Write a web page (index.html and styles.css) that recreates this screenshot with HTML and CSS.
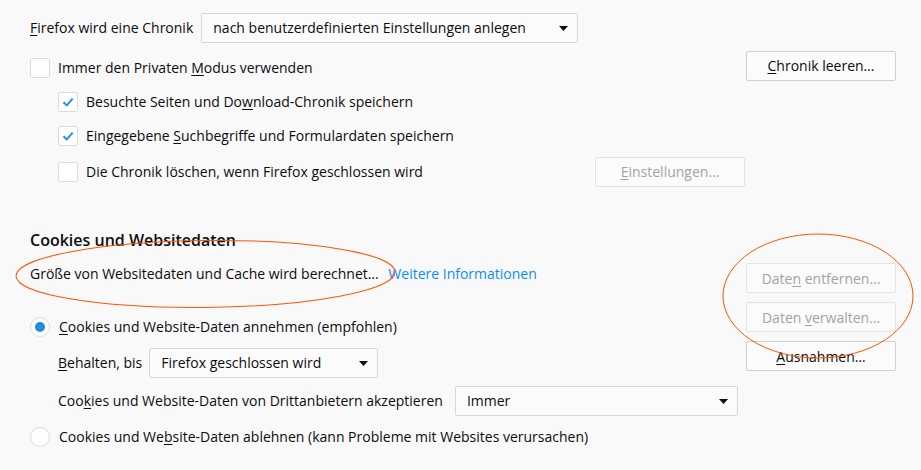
FILE: index.html
```html
<!DOCTYPE html>
<html lang="de">
<head>
    <meta charset="UTF-8">
    <title>Datenschutz &amp; Sicherheit</title>
    <link rel="stylesheet" href="styles.css">
</head>
<body>
    <div class="prefs">
        <!-- Chronik -->
        <div class="row row-history">
            <span class="label"><u>F</u>irefox wird eine Chronik</span>
            <div class="select select-history">
                <span>nach benutzerdefinierten Einstellungen anlegen</span>
                <svg class="arrow" width="9" height="5" viewBox="0 0 9 5"><path d="M0 0H9L4.5 5Z"/></svg>
            </div>
        </div>

        <div class="row row-private">
            <label class="check">
                <span class="box"></span>
                <span>Immer den Privaten <u>M</u>odus verwenden</span>
            </label>
            <button class="btn"><u>C</u>hronik leeren…</button>
        </div>

        <div class="row indent row-check">
            <label class="check">
                <span class="box checked">
                    <svg width="18" height="18" viewBox="0 0 18 18"><path d="M4.5 9.2L7.8 12.4L13.6 5.6"/></svg>
                </span>
                <span>Besuchte Seiten und Do<u>w</u>nload-Chronik speichern</span>
            </label>
        </div>

        <div class="row indent row-check row-check2">
            <label class="check">
                <span class="box checked">
                    <svg width="18" height="18" viewBox="0 0 18 18"><path d="M4.5 9.2L7.8 12.4L13.6 5.6"/></svg>
                </span>
                <span>Eingegebene <u>S</u>uchbegriffe und Formulardaten speichern</span>
            </label>
        </div>

        <div class="row indent row-clear">
            <label class="check">
                <span class="box"></span>
                <span>Die Chronik löschen, wenn Firefox <u>g</u>eschlossen wird</span>
            </label>
            <button class="btn" disabled><u>E</u>instellungen…</button>
        </div>

        <!-- Cookies -->
        <h2>Cookies und Websitedaten</h2>

        <div class="cookies">
            <div class="cookies-left">
                <div class="size-info">
                    Größe von Websitedaten und Cache wird berechnet…
                    <a href="#">Weitere Informationen</a>
                </div>

                <label class="radio row-radio1">
                    <span class="dot selected"></span>
                    <span><u>C</u>ookies und Website-Daten annehmen (empfohlen)</span>
                </label>

                <div class="row indent row-keep">
                    <span class="label"><u>B</u>ehalten, bis</span>
                    <div class="select select-keep">
                        <span>Firefox geschlossen wird</span>
                        <svg class="arrow" width="9" height="5" viewBox="0 0 9 5"><path d="M0 0H9L4.5 5Z"/></svg>
                    </div>
                </div>

                <div class="row indent row-third">
                    <span class="label">Coo<u>k</u>ies und Website-Daten von Drittanbietern akzeptieren</span>
                    <div class="select select-third">
                        <span>Immer</span>
                        <svg class="arrow" width="9" height="5" viewBox="0 0 9 5"><path d="M0 0H9L4.5 5Z"/></svg>
                    </div>
                </div>

                <label class="radio row-radio2">
                    <span class="dot"></span>
                    <span>Cookies und We<u>b</u>site-Daten ablehnen (kann Probleme mit Websites verursachen)</span>
                </label>
            </div>

            <div class="cookies-right">
                <button class="btn" disabled>Date<u>n</u> entfernen…</button>
                <button class="btn" disabled>Daten <u>v</u>erwalten…</button>
                <button class="btn"><u>A</u>usnahmen…</button>
            </div>
        </div>
    </div>

    <!-- Markierungen -->
    <svg class="marks" width="921" height="470" viewBox="0 0 921 470">
        <ellipse cx="205.5" cy="274" rx="189.5" ry="33.5" transform="rotate(-0.6 205.5 274)"/>
        <ellipse cx="818" cy="296" rx="95" ry="62"/>
    </svg>
</body>
</html>
```

FILE: styles.css
```css
body {
    margin: 0;
    background-color: #f9f9fa;
    color: #0c0c0d;
    font-family: "Open Sans", "Noto Sans", sans-serif;
    font-size: 14px;
    line-height: 20px;
    width: 921px;
    height: 470px;
    overflow: hidden;
}
u {
    text-decoration-thickness: 1px;
    text-underline-offset: 2px;
}
.prefs {
    padding: 13px 0 0 30px;
    width: 866px;
}
.row {
    display: flex;
    align-items: center;
}
.indent {
    margin-left: 28px;
}
.label {
    margin-right: 8px;
}
.select {
    display: flex;
    align-items: center;
    justify-content: space-between;
    box-sizing: border-box;
    height: 30px;
    padding: 0 9px 0 11px;
    background-color: #fbfbfb;
    border: 1px solid #d7d7db;
    border-radius: 2px;
}
.arrow {
    fill: #0c0c0d;
}
.select-history {
    width: 377px;
}
.select-keep {
    width: 229px;
}
.select-third {
    width: 283px;
}
.btn {
    box-sizing: border-box;
    width: 150px;
    height: 30px;
    padding: 0;
    font-family: inherit;
    font-size: 14px;
    color: #0c0c0d;
    background-color: #fbfbfb;
    border: 1px solid #d0d0d3;
    border-radius: 2px;
}
.btn:disabled {
    color: #a3a3a5;
    border-color: #e3e3e5;
}
.check,
.radio {
    display: flex;
    align-items: center;
}
.box {
    box-sizing: border-box;
    width: 20px;
    height: 20px;
    margin-right: 8px;
    background-color: #fff;
    border: 1px solid #dcdcde;
    border-radius: 2px;
    display: flex;
    align-items: center;
    justify-content: center;
}
.box svg path {
    fill: none;
    stroke: #2590e0;
    stroke-width: 2;
}
.row-private {
    margin-top: 8px;
    height: 29px;
    justify-content: space-between;
}
.row-private .check {
    margin-top: 5px;
}
.row-check {
    margin-top: 12px;
    height: 20px;
}
.row-check2 {
    margin-top: 14px;
}
.row-clear {
    margin-top: 11px;
    height: 29px;
    justify-content: space-between;
    margin-right: 151px;
}
h2 {
    margin: 42px 0 0;
    font-size: 16px;
    font-weight: 600;
    line-height: 24px;
    color: #0c0c0d;
}
.cookies {
    display: flex;
    justify-content: space-between;
    margin-top: 11px;
}
.size-info {
    height: 20px;
    margin-top: 1px;
}
.size-info a {
    margin-left: 6px;
    color: #0a8dff;
    text-decoration: none;
}
.dot {
    box-sizing: border-box;
    width: 20px;
    height: 20px;
    margin-right: 9px;
    background-color: #fff;
    border: 1px solid #dcdcde;
    border-radius: 50%;
    display: flex;
    align-items: center;
    justify-content: center;
}
.dot.selected::after {
    content: "";
    width: 10px;
    height: 10px;
    border-radius: 50%;
    background-color: #1f8ddb;
}
.row-radio1 {
    margin-top: 33px;
    height: 20px;
}
.row-keep {
    margin-top: 11px;
    height: 30px;
}
.row-keep .label {
    margin-right: 7px;
}
.row-third {
    margin-top: 8px;
    height: 30px;
}
.row-third .label {
    margin-right: 12px;
}
.row-radio2 {
    margin-top: 11px;
    height: 20px;
}
.cookies-right {
    display: flex;
    flex-direction: column;
    gap: 9px;
}
.marks {
    position: absolute;
    left: 0;
    top: 0;
    pointer-events: none;
}
.marks ellipse {
    fill: none;
    stroke: #ff5500;
    stroke-width: 1;
}
```
